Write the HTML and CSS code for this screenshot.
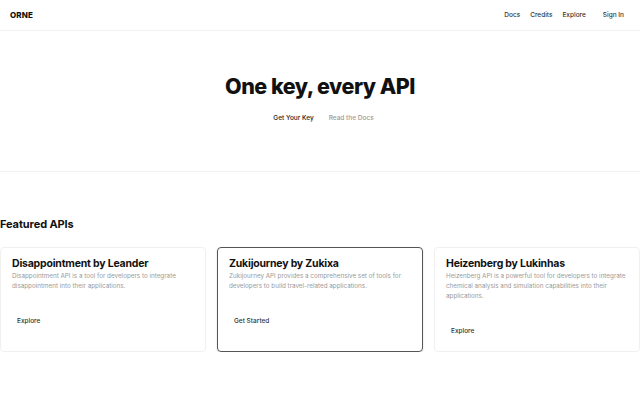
FILE: index.html
```html
<!DOCTYPE html>
<html lang="en">
<head>
<meta charset="utf-8">
<title>ORNE</title>
<link rel="stylesheet" href="styles.css">
</head>
<body>
<header class="topbar">
  <div class="logo">ORNE</div>
  <nav class="nav">
    <a class="nav-link" href="#">Docs</a>
    <a class="nav-link" href="#">Credits</a>
    <a class="nav-link" href="#">Explore</a>
    <a class="nav-link signin" href="#">Sign In</a>
  </nav>
</header>
<section class="hero">
  <h1 class="hero-title">One key, every API</h1>
  <div class="hero-actions">
    <a class="btn btn-primary" href="#">Get Your Key</a>
    <a class="btn btn-muted" href="#">Read the Docs</a>
  </div>
</section>
<section class="featured">
  <h2 class="featured-title">Featured APIs</h2>
  <div class="cards">
    <div class="card">
      <h3 class="card-title">Disappointment by Leander</h3>
      <p class="card-desc">Disappointment API is a tool for developers to integrate disappointment into their applications.</p>
      <a class="card-btn" href="#">Explore</a>
    </div>
    <div class="card card-active">
      <h3 class="card-title">Zukijourney by Zukixa</h3>
      <p class="card-desc">Zukijourney API provides a comprehensive set of tools for developers to build travel-related applications.</p>
      <a class="card-btn" href="#">Get Started</a>
    </div>
    <div class="card">
      <h3 class="card-title">Heizenberg by Lukinhas</h3>
      <p class="card-desc">Heizenberg API is a powerful tool for developers to integrate chemical analysis and simulation capabilities into their applications.</p>
      <a class="card-btn" href="#">Explore</a>
    </div>
  </div>
</section>
</body>
</html>
```
FILE: styles.css
```css
* { box-sizing: border-box; }
html, body { margin: 0; padding: 0; background: #fff; }
body {
  font-family: Inter, "Noto Sans", sans-serif;
  color: #111;
  -webkit-font-smoothing: antialiased;
}
a { text-decoration: none; color: inherit; }

.topbar {
  height: 31px;
  display: flex;
  align-items: center;
  justify-content: space-between;
  padding: 0 16px 0 10px;
  border-bottom: 1px solid #f1f1f1;
}
.logo {
  font-size: 8px;
  font-weight: 800;
  letter-spacing: 0.1px;
  color: #111;
}
.nav {
  display: flex;
  align-items: center;
  gap: 10px;
}
.nav-link {
  font-size: 6.5px;
  font-weight: 500;
  color: #333;
}
.signin { margin-left: 7px; }

.hero {
  height: 141px;
  display: flex;
  flex-direction: column;
  align-items: center;
  border-bottom: 1px solid #f1f1f1;
  padding-top: 40px;
}
.hero-title {
  margin: 0;
  font-size: 21.5px;
  font-weight: 800;
  letter-spacing: -0.5px;
  line-height: 30px;
  color: #111;
}
.hero-actions {
  display: flex;
  gap: 15px;
  margin-top: 12px;
  margin-left: 7px;
}
.btn {
  font-size: 6.5px;
  font-weight: 500;
  line-height: 10px;
}
.btn-primary { color: #222; }
.btn-muted { color: #999; }

.featured {
  padding-top: 45px;
}
.featured-title {
  margin: 0 0 16px 0;
  font-size: 11px;
  font-weight: 700;
  line-height: 14px;
  letter-spacing: -0.1px;
}
.cards {
  display: grid;
  grid-template-columns: repeat(3, 1fr);
  gap: 11px;
}
.card {
  border: 1px solid #f0f0f0;
  border-radius: 4px;
  padding: 9px 10px 11px 11px;
  display: flex;
  flex-direction: column;
  align-items: flex-start;
  box-shadow: 0 1px 2px rgba(0,0,0,0.02);
}
.card-active {
  border: 1px solid #555;
  box-shadow: 0 1px 2px rgba(0,0,0,0.15);
}
.card-title {
  margin: 0;
  font-size: 10.5px;
  font-weight: 700;
  line-height: 14px;
  letter-spacing: -0.2px;
  color: #111;
}
.card-desc {
  margin: 0 0 21px 0;
  font-size: 6.3px;
  line-height: 10px;
  color: #9a9a9a;
}
.card-btn {
  font-size: 6.5px;
  font-weight: 500;
  line-height: 10px;
  color: #333;
  padding: 4px 5px;
}
```
